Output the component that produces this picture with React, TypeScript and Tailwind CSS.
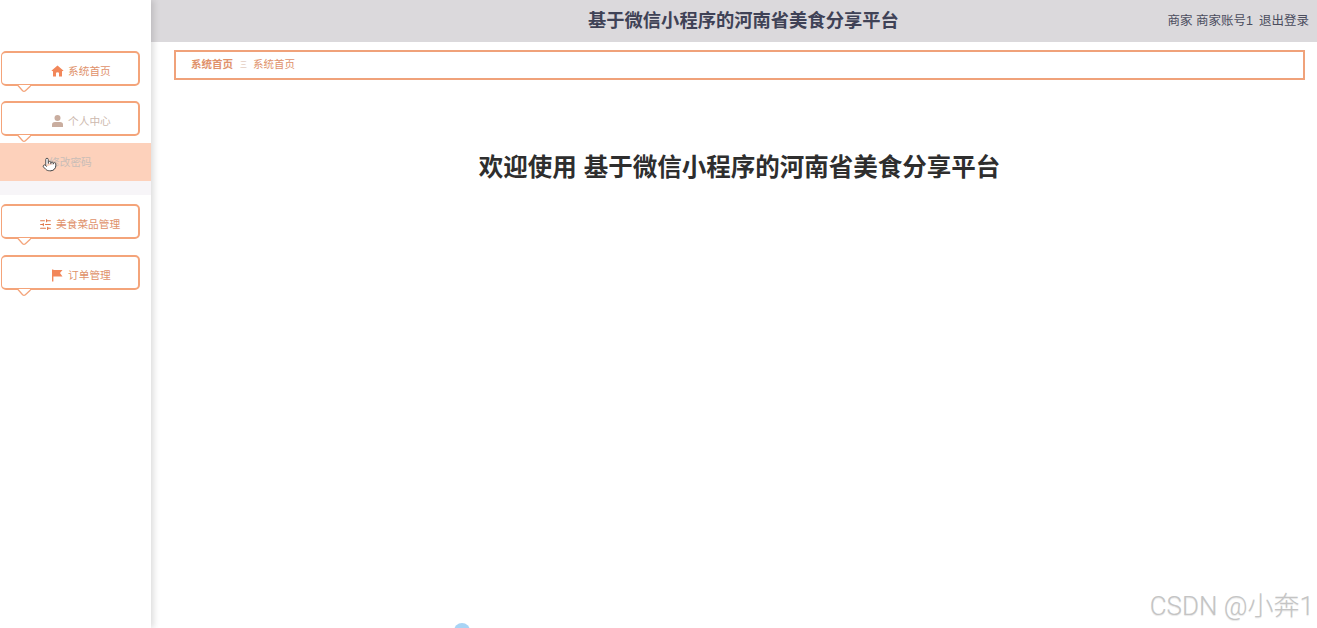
import { SlidersHorizontal, Pointer } from "lucide-react";
import type { ReactNode } from "react";

const font = "font-['Liberation_Sans','Noto_Sans_CJK_SC',sans-serif]";

const HomeIcon = ({ color }: { color: string }) => (
  <svg width="13" height="12" viewBox="0 0 13 12">
    <path
      d="M6.5 0.5 L12.6 5.8 L11 6.2 L11 11.5 L8 11.5 L8 7.8 Q6.5 6.6 5 7.8 L5 11.5 L2 11.5 L2 6.2 L0.4 5.8 Z"
      fill={color}
    />
  </svg>
);

const PersonIcon = ({ color }: { color: string }) => (
  <svg width="13" height="12" viewBox="0 0 13 12">
    <circle cx="6.5" cy="3" r="3" fill={color} />
    <path d="M1 12 L1 9.5 Q1 7 4 7 L9 7 Q12 7 12 9.5 L12 12 Z" fill={color} />
  </svg>
);

const FlagIcon = ({ color }: { color: string }) => (
  <svg width="13" height="13" viewBox="0 0 13 13">
    <path d="M1 0.5 L2.4 0.5 L2.4 12.5 L1 12.5 Z M2.4 1 L11.5 1 L9 4 L11.5 7.5 L2.4 7.5 Z" fill={color} />
  </svg>
);

const MenuCard = ({
  icon,
  label,
  iconX,
  muted,
}: {
  icon: ReactNode;
  label: string;
  iconX: string;
  muted?: boolean;
}) => (
  <div className="relative z-10 h-[35px] w-[139px] ml-px rounded-[5px] border border-t-2 border-[#f4a47a] border-b-2 border-r-2 bg-white">
    <div className={`flex items-center gap-[4px] pt-[10px] ${iconX}`}>
      {icon}
      <span className={`text-[10.7px] leading-[16px] ${muted ? "text-[#cdb9ae]" : "text-[#e0916a]"}`}>{label}</span>
    </div>
    {/* tail under the card */}
    <svg className="absolute left-[15px] top-[31px]" width="16" height="9" viewBox="0 0 16 9">
      <path d="M1 1 L5.6 6.8 Q7 8 8.4 6.8 L13 2.6 L13 1 Z" fill="#fff" />
      <path d="M1 1.5 L5.6 6.8 Q7 8 8.4 6.8 L13.5 2" fill="none" stroke="#f4a47a" strokeWidth="1.3" />
    </svg>
  </div>
);

export default function App() {
  return (
    <div className={`relative flex h-[628px] w-[1317px] overflow-hidden bg-white ${font}`}>
      {/* Sidebar */}
      <aside className="relative z-10 w-[151px] shrink-0 bg-white pt-[51px] shadow-[3px_0_6px_rgba(0,0,0,0.13)]">
        <MenuCard iconX="pl-[49px]" label="系统首页" icon={<HomeIcon color="#f2875a" />} />
        <div className="h-[15px]" />
        <MenuCard iconX="pl-[49px]" label="个人中心" muted icon={<PersonIcon color="#c9ad9f" />} />
        <div className="mt-[7px] relative h-[38px] bg-[#fdd1bb] pl-[49px] text-[10.7px] leading-[38px] text-[#c9bdb7]">
          修改密码
          <Pointer size={15} strokeWidth={1.5} className="absolute left-[42px] top-[14px] text-[#444] fill-white" />
        </div>
        <div className="h-[14px] bg-[#f7f5f8]" />
        <div className="h-[9px]" />
        <MenuCard
          iconX="pl-[37px]"
          label="美食菜品管理"
          icon={<SlidersHorizontal size={13} stroke="#e0784a" />}
        />
        <div className="h-[16px]" />
        <MenuCard iconX="pl-[49px]" label="订单管理" icon={<FlagIcon color="#f2875a" />} />
      </aside>

      {/* Main */}
      <div className="flex min-w-0 flex-1 flex-col">
        <header className="flex h-[42px] shrink-0 items-center bg-[#dbd9dc] pr-[8px]">
          <h1 className="ml-[437px] text-[18.3px] font-bold text-[#3f4256]">基于微信小程序的河南省美食分享平台</h1>
          <div className="ml-auto flex gap-[6px] text-[12.5px] text-[#4a4c5c]">
            <span>商家 商家账号1</span>
            <span>退出登录</span>
          </div>
        </header>

        <main className="pl-[23px] pr-[12px] pt-[8px]">
          <div className="flex h-[30px] items-center border-2 border-[#f0a27a] pl-[15px] text-[10.5px] text-[#e0916a]">
            <span className="font-bold">系统首页</span>
            <span className="ml-[7px] mr-[6px] text-[7px] text-[#d8b8a8]">三</span>
            <span>系统首页</span>
          </div>
          <h2 className="mt-[70px] text-center text-[24.5px] font-bold leading-[36px] text-[#2e2e2e]">
            欢迎使用 基于微信小程序的河南省美食分享平台
          </h2>
        </main>
      </div>

      {/* Watermark and the clipped blue dot */}
      <div className="absolute bottom-[6px] right-[3px] font-['Roboto','Noto_Sans_CJK_SC',sans-serif] text-[26px] font-light leading-[32px] text-[#c4c4c4] [text-shadow:0_1px_1px_rgba(0,0,0,0.1)]">
        CSDN @小奔1
      </div>
      <div className="absolute left-[454px] top-[623px] h-[16px] w-[16px] rounded-full bg-[#a8d4f5]" />
    </div>
  );
}
